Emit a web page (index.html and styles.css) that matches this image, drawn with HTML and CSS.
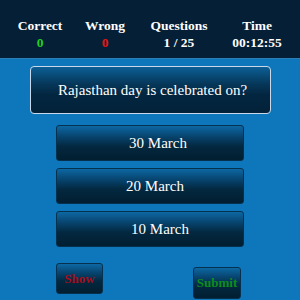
FILE: index.html
```html
<!DOCTYPE html>
<html lang="en">
<head>
    <meta charset="UTF-8"/>
    <title>Quiz</title>
    <link rel="stylesheet" href="styles.css">
</head>
<body>
<header class="stats">
    <div class="stat">
        <div class="label">Correct</div>
        <div class="value good">0</div>
    </div>
    <div class="stat">
        <div class="label">Wrong</div>
        <div class="value bad">0</div>
    </div>
    <div class="stat">
        <div class="label">Questions</div>
        <div class="value">1 / 25</div>
    </div>
    <div class="stat">
        <div class="label">Time</div>
        <div class="value">00:12:55</div>
    </div>
</header>

<div class="question">Rajasthan day is celebrated on?</div>

<div class="options">
    <button class="option">30 March</button>
    <button class="option opt-2">20 March</button>
    <button class="option opt-3">10 March</button>
</div>

<div class="actions">
    <button class="btn btn-show">Show</button>
    <button class="btn btn-submit">Submit</button>
</div>
</body>
</html>
```

FILE: styles.css
```css
body {
    margin: 0;
    background: #0e76ba;
    font-family: "Liberation Serif", "Times New Roman", serif;
    color: #fff;
}

.stats {
    height: 41px;
    padding-top: 17px;
    background: #052036;
    border-bottom: 1px solid #2a7fb6;
    display: grid;
    grid-template-columns: 80px 50px 98px 58px;
}

.stat {
    text-align: center;
    font-size: 13.5px;
    font-weight: bold;
    line-height: 17px;
    white-space: nowrap;
}

.value.good {
    color: #22d022;
}

.value.bad {
    color: #e01818;
}

.question {
    box-sizing: border-box;
    width: 241px;
    height: 48px;
    margin: 7px 0 0 30px;
    border: 1px solid #c9d9ea;
    border-radius: 4px;
    background: linear-gradient(#0c5f96 0%, #06395c 35%, #032640 60%, #03223a 100%);
    font-size: 15px;
    display: flex;
    align-items: center;
    justify-content: center;
    padding-left: 4px;
}

.options {
    display: flex;
    flex-direction: column;
    gap: 7px;
    margin: 11px 0 0 56px;
    width: 188px;
}

.option, .btn {
    box-sizing: border-box;
    border: 1px solid #05304e;
    border-radius: 3px;
    background: linear-gradient(#0d68a3 0%, #074570 30%, #03283f 60%, #021e31 100%);
    font-family: inherit;
    padding: 0;
    outline: 0;
}

.option {
    height: 36px;
    color: #fff;
    font-size: 15px;
    padding-left: 16px;
}

.option.opt-2 {
    padding-left: 10px;
}

.option.opt-3 {
    padding-left: 20px;
}

.actions {
    display: flex;
    justify-content: space-between;
    align-items: flex-start;
    margin: 16px 0 0 56px;
    width: 185px;
}

.btn {
    width: 47px;
    height: 31px;
    font-size: 13px;
    font-weight: bold;
}

.btn-show {
    color: #a50d1c;
}

.btn-submit {
    width: 48px;
    height: 32px;
    margin-top: 4px;
    color: #0e8d1c;
}
```
